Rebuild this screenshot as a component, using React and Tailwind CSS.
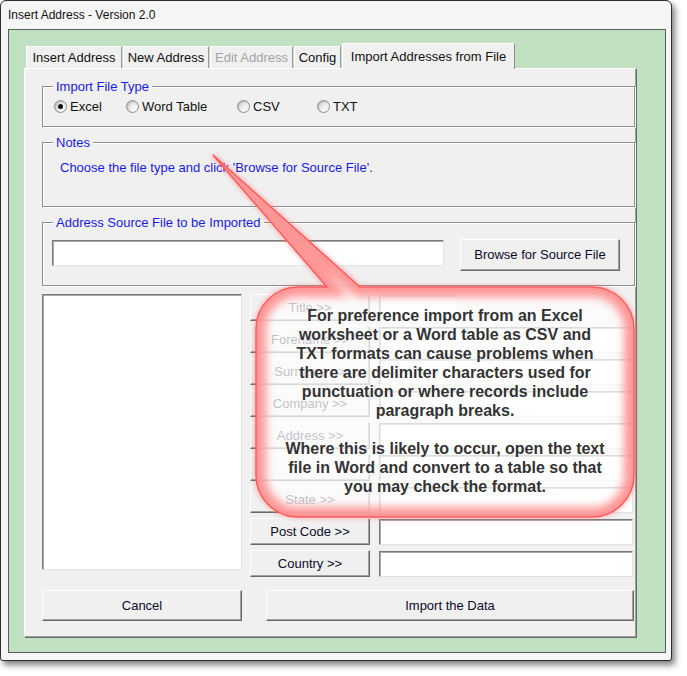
const font = "font-['Liberation_Sans',Arial,sans-serif]";

function Frame({ legend, height, className = "", children }) {
  return (
    <div
      className={`border border-[#8f8f8f] shadow-[inset_1px_1px_0_#ffffff,1px_1px_0_#ffffff] ${className}`}
      style={{ height }}
    >
      <div className="-mt-[8px] ml-[10px] w-fit px-[3px] bg-[#f0f0f0] text-[13px] leading-[15px] text-[#1a1ae0]">
        {legend}
      </div>
      {children}
    </div>
  );
}

function Radio({ label, checked, width }) {
  return (
    <div className="flex items-center gap-[3px]" style={{ width }}>
      <div className="w-[13px] h-[13px] rounded-full border border-[#8e8f8f] bg-gradient-to-br from-[#dcdcdc] to-[#ffffff] shadow-[inset_1px_1px_2px_rgba(0,0,0,0.2)] flex items-center justify-center">
        {checked && <div className="w-[5px] h-[5px] rounded-full bg-[#111]" />}
      </div>
      <span className="text-[13px] leading-[15px] text-[#111]">{label}</span>
    </div>
  );
}

function Button({ children, className = "" }) {
  return (
    <div
      className={`flex items-center justify-center bg-[#f0f0f0] border border-t-[#fdfdfd] border-l-[#fdfdfd] border-r-[#696969] border-b-[#696969] shadow-[inset_-1px_-1px_0_#a0a0a0] text-[13px] text-[#0b0b2a] ${className}`}
    >
      {children}
    </div>
  );
}

function TextBox({ className = "" }) {
  return (
    <div
      className={`bg-white border border-t-[#7a7a7a] border-l-[#7a7a7a] border-r-[#e3e3e3] border-b-[#e3e3e3] shadow-[inset_1px_1px_0_#a9a9a9] ${className}`}
    />
  );
}

const fields = [
  { label: "Title >>", short: true },
  { label: "Forename >>" },
  { label: "Surname >>" },
  { label: "Company >>" },
  { label: "Address >>" },
  { label: "" },
  { label: "State >>" },
  { label: "Post Code >>" },
  { label: "Country >>" },
];

function Tab({ label, width, active, disabled }) {
  if (active) {
    return (
      <div
        className="h-[26px] -mb-[1px] relative z-10 bg-[#f0f0f0] border border-b-0 border-t-white border-l-white border-r-[#8a8a8a] flex items-center justify-center text-[13px] text-[#111]"
        style={{ width }}
      >
        {label}
      </div>
    );
  }
  return (
    <div
      className={`h-[22px] bg-[#f0f0f0] border border-b-0 border-t-white border-l-white border-r-[#9a9a9a] flex items-center justify-center pt-[1px] text-[13px] ${
        disabled ? "text-[#a3a3a3]" : "text-[#111]"
      }`}
      style={{ width }}
    >
      {label}
    </div>
  );
}

function Callout() {
  const d =
    "M298 287 L327 287 L213 155 L360 287 L592 287 A42 42 0 0 1 634 329 L634 475 A42 42 0 0 1 592 517 L298 517 A42 42 0 0 1 256 475 L256 329 A42 42 0 0 1 298 287 Z";
  return (
    <>
      <svg className="absolute left-0 top-0 pointer-events-none" width="687" height="676">
        <defs>
          <clipPath id="callclip">
            <path d={d} />
          </clipPath>
          <filter id="blur8" x="-20%" y="-20%" width="140%" height="140%">
            <feGaussianBlur stdDeviation="4" />
          </filter>
          <filter id="blur3" x="-20%" y="-20%" width="140%" height="140%">
            <feGaussianBlur stdDeviation="2" />
          </filter>
        </defs>
        <path d={d} fill="none" stroke="#ff7070" strokeWidth="4" opacity="0.45" filter="url(#blur3)" />
        <path d={d} fill="rgba(255,255,255,0.74)" />
        <g clipPath="url(#callclip)">
          <path d={d} fill="none" stroke="#ff8585" strokeWidth="20" opacity="0.85" filter="url(#blur8)" />
        </g>
        <path d={d} fill="none" stroke="#ff5c5c" strokeWidth="1.5" />
      </svg>
      <div className="absolute left-[256px] top-[306px] w-[378px] text-center font-['Liberation_Sans',Arial,sans-serif] font-bold text-[16px] leading-[19px] text-[#333] [text-shadow:0_0_3px_#fff]">
        <p>For preference import from an Excel</p>
        <p>worksheet or a Word table as CSV and</p>
        <p>TXT formats can cause problems when</p>
        <p>there are delimiter characters used for</p>
        <p>punctuation or where records include</p>
        <p>paragraph breaks.</p>
        <p>&nbsp;</p>
        <p>Where this is likely to occur, open the text</p>
        <p>file in Word and convert to a table so that</p>
        <p>you may check the format.</p>
      </div>
    </>
  );
}

export default function App() {
  return (
    <div className={`relative w-[687px] h-[676px] bg-white overflow-hidden ${font}`}>
      <div className="w-[672px] h-[661px] border border-[#2c2c2c] rounded-t-[6px] rounded-b-[3px] bg-[#f6f6f6] shadow-[3px_4px_6px_rgba(0,0,0,0.5)] flex flex-col">
        <div className="h-[28px] pl-[7px] flex items-center text-[12px] text-[#111]">
          Insert Address - Version 2.0
        </div>
        <div className="ml-[7px] w-[658px] h-[624px] bg-[#c2e0c2] border border-[#5c5c5c] pl-[15px] pt-[13px]">
          <div className="flex items-end gap-[1px] pl-[2px] h-[25px]">
            <Tab label="Insert Address" width={96} />
            <Tab label="New Address" width={86} />
            <Tab label="Edit Address" width={83} disabled />
            <Tab label="Config" width={47} />
            <Tab label="Import Addresses from File" width={173} active />
          </div>
          <div className="w-[613px] h-[570px] bg-[#f0f0f0] border border-t-white border-l-white border-r-[#696969] border-b-[#696969] shadow-[inset_-1px_-1px_0_#a0a0a0] pl-[17px]">
            <Frame legend="Import File Type" height={41} className="mt-[17px] w-[593px]">
              <div className="flex mt-[5px] pl-[11px]">
                <Radio label="Excel" checked width={72} />
                <Radio label="Word Table" width={111} />
                <Radio label="CSV" width={80} />
                <Radio label="TXT" width={60} />
              </div>
            </Frame>
            <Frame legend="Notes" height={65} className="mt-[15px] w-[593px]">
              <div className="mt-[10px] pl-[17px] text-[13px] leading-[15px] text-[#1a1ae0]">
                Choose the file type and click 'Browse for Source File'.
              </div>
            </Frame>
            <Frame legend="Address Source File to be Imported" height={64} className="mt-[15px] w-[593px]">
              <div className="flex items-start mt-[10px] pl-[9px]">
                <TextBox className="w-[392px] h-[26px]" />
                <Button className="ml-[16px] -mt-[1px] w-[160px] h-[32px]">Browse for Source File</Button>
              </div>
            </Frame>
            <div className="flex items-start mt-[8px]">
              <TextBox className="w-[200px] h-[276px]" />
              <div className="ml-[8px] flex flex-col gap-[5px]">
                {fields.map((f, i) => (
                  <div key={i} className="flex items-center gap-[9px] h-[27px]">
                    <Button className="w-[120px] h-[27px]">{f.label}</Button>
                    <TextBox className={`${f.short ? "w-[78px]" : "w-[254px]"} h-[26px]`} />
                  </div>
                ))}
              </div>
            </div>
            <div className="flex mt-[13px] gap-[24px]">
              <Button className="w-[200px] h-[31px]">Cancel</Button>
              <Button className="w-[368px] h-[31px]">Import the Data</Button>
            </div>
          </div>
        </div>
      </div>
      <Callout />
    </div>
  );
}
